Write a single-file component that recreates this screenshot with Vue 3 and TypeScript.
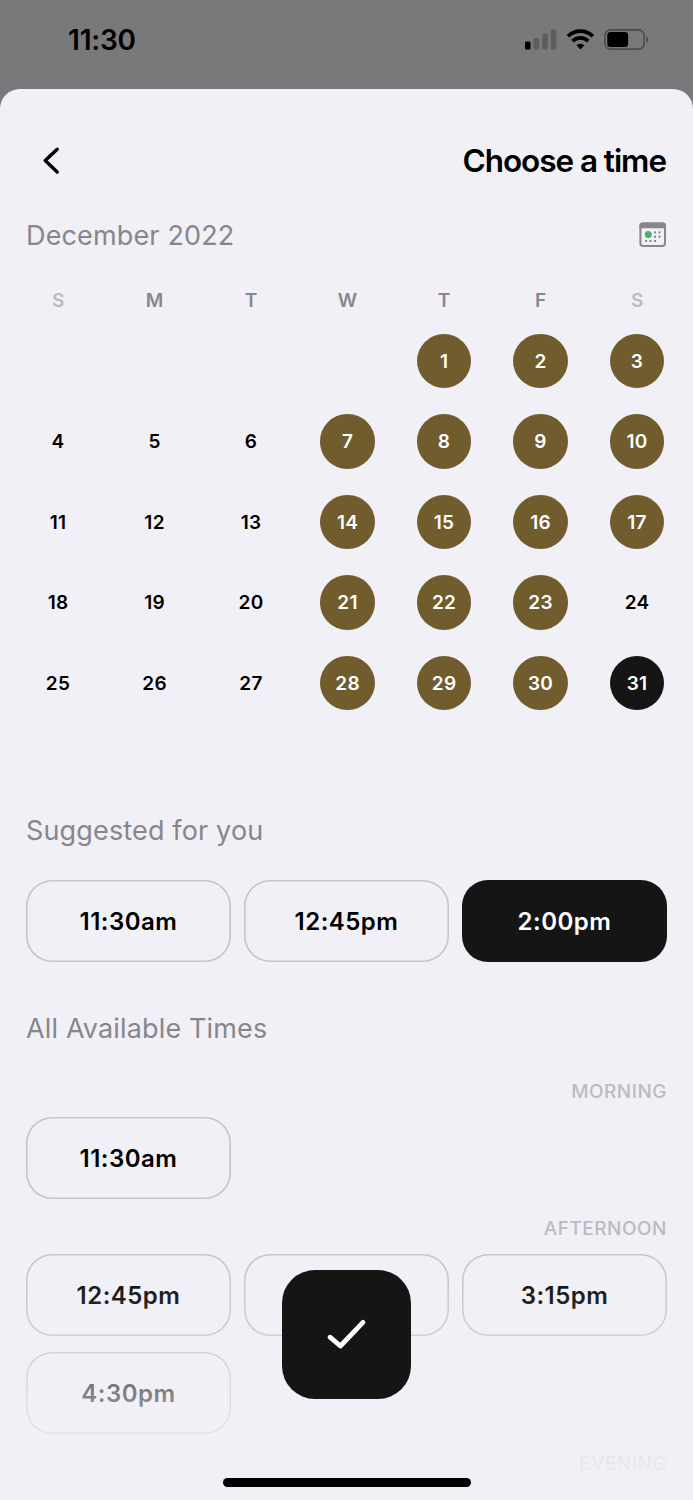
<script setup lang="ts">
interface Day {
  n: number
  state: 'open' | 'plain' | 'selected'
}

const weekdays: string[] = ['S', 'M', 'T', 'W', 'T', 'F', 'S']
const plain: number[] = [4, 5, 6, 11, 12, 13, 18, 19, 20, 24, 25, 26, 27]
const days: Day[] = Array.from({ length: 31 }, (_, i) => {
  const n = i + 1
  return { n, state: n === 31 ? 'selected' : plain.includes(n) ? 'plain' : 'open' }
})

const suggested: string[] = ['11:30am', '12:45pm', '2:00pm']
const chosen = '2:00pm'
const afternoon: string[] = ['12:45pm', '2:00pm', '3:15pm', '4:30pm']
</script>

<template>
  <div class="screen">
    <header class="status">
      <span class="clock">11:30</span>
      <svg class="indicators" width="126" height="24" viewBox="0 0 126 24">
        <rect x="0" y="12.6" width="5.6" height="8" rx="1.6" fill="#000" />
        <rect x="8.6" y="9" width="5.6" height="11.6" rx="1.6" fill="#5d5d5f" />
        <rect x="17.2" y="4.8" width="5.6" height="15.8" rx="1.6" fill="#5d5d5f" />
        <rect x="25.8" y="0.4" width="5.6" height="20.2" rx="1.6" fill="#5d5d5f" />
        <g fill="none" stroke="#000" stroke-width="3.7">
          <path d="M43 7.2a17.6 17.6 0 0 1 24.8 0" />
          <path d="M47.5 12.1a11.2 11.2 0 0 1 15.8 0" />
        </g>
        <path d="M55.4 20.4l-4-4.1a5.8 5.8 0 0 1 8 0z" fill="#000" />
        <rect x="79.9" y="0.9" width="39.2" height="19.2" rx="5.6" fill="none" stroke="#4b4b4d" stroke-width="1.6" />
        <rect x="82.3" y="3" width="20.8" height="15" rx="3.2" fill="#000" />
        <path d="M121.2 7.2c2.8 1 2.8 5.6 0 6.6z" fill="#4b4b4d" />
      </svg>
    </header>

    <main class="sheet">
      <div class="nav">
        <svg class="back" width="20" height="30" viewBox="0 0 20 30">
          <path d="M16.2 3.2L4.200 14.600l12 11.500" fill="none" stroke="#000" stroke-width="3.400" stroke-linecap="round" stroke-linejoin="round" />
        </svg>
        <h1>Choose a time</h1>
      </div>

      <div class="month">
        <h2>December 2022</h2>
        <svg class="month-icon" width="28" height="26" viewBox="0 0 28 26">
          <rect x="1.4" y="1.400" width="24.600" height="22.600" rx="2.800" fill="#f1f0f6" stroke="#87868b" stroke-width="2" />
          <path d="M.4 6.200V3.400a3 3 0 0 1 3-3H24a3 3 0 0 1 3 3v2.800z" fill="#87868b" />
          <circle cx="9.300" cy="12.400" r="3.500" fill="#45b36b" />
          <g fill="#87868b">
            <rect x="15" y="9.400" width="2" height="2" />
            <rect x="19.500" y="9.400" width="2" height="2" />
            <rect x="15" y="13.700" width="2" height="2" />
            <rect x="19.500" y="13.700" width="2" height="2" />
            <rect x="6.200" y="18" width="2" height="2" />
            <rect x="10.500" y="18" width="2" height="2" />
            <rect x="15" y="18" width="2" height="2" />
          </g>
        </svg>
      </div>

      <div class="calendar weekdays">
        <span v-for="(d, i) in weekdays" :key="i" :class="{ weekend: i === 0 || i === 6 }">{{ d }}</span>
      </div>
      <div class="calendar days">
        <span v-for="d in days" :key="d.n" class="day" :class="[d.state, { first: d.n === 1 }]">{{ d.n }}</span>
      </div>

      <h2 class="suggested-title">Suggested for you</h2>
      <div class="slots">
        <button v-for="t in suggested" :key="t" class="slot" :class="{ chosen: t === chosen }">{{ t }}</button>
      </div>

      <h2 class="all-title">All Available Times</h2>
      <h3>MORNING</h3>
      <div class="slots">
        <button class="slot">11:30am</button>
      </div>
      <h3 class="next">AFTERNOON</h3>
      <div class="slots">
        <button v-for="t in afternoon" :key="t" class="slot">{{ t }}</button>
      </div>
      <h3 class="next">EVENING</h3>
      <div class="slots">
        <button class="slot"></button>
      </div>
    </main>

    <div class="fade"></div>
    <button class="confirm" aria-label="Confirm">
      <svg width="42" height="34" viewBox="0 0 42 34">
        <path d="M4 19.200L14.400 28 37 4.400" fill="none" stroke="#fff" stroke-width="4.800" stroke-linecap="round" stroke-linejoin="round" />
      </svg>
    </button>
    <div class="home-bar"></div>
  </div>
</template>

<style>
body {
  margin: 0;
}
</style>

<style scoped>
.screen {
  position: relative;
  width: 693px;
  height: 1500px;
  overflow: hidden;
  background: #79797b;
  font-family: Inter, "Liberation Sans", sans-serif;
  color: #000;
}
.status {
  height: 89px;
  display: flex;
  justify-content: space-between;
  padding: 0 42px 0 68px;
  box-sizing: border-box;
}
.clock {
  margin-top: 22px;
  line-height: 36px;
  font-size: 28px;
  font-weight: 600;
  letter-spacing: -0.2px;
}
.indicators {
  margin-top: 29px;
}
.sheet {
  height: 1411px;
  box-sizing: border-box;
  padding: 51px 26px 0;
  border-radius: 20px 20px 0 0;
  background: #f1f0f6;
  overflow: hidden;
}
.nav,
.month {
  display: flex;
  justify-content: space-between;
  align-items: center;
}
.nav {
  height: 42px;
}
.back {
  margin-left: 15px;
}
h1,
h2,
h3 {
  margin: 0;
}
h1 {
  padding-right: 1px;
  font-size: 31.5px;
  line-height: 42px;
  font-weight: 600;
  letter-spacing: -1.05px;
}
h2 {
  font-size: 27px;
  line-height: 36px;
  font-weight: 400;
  letter-spacing: 0.15px;
  color: #87868b;
}
.month {
  height: 36px;
  margin-top: 36px;
}
.month-icon {
  margin-bottom: 2px;
}
.calendar {
  display: grid;
  grid-template-columns: repeat(7, 96.5px);
  margin: 0 -16.5px 0 -16.2px;
  justify-items: center;
}
.weekdays {
  margin-top: 35px;
  line-height: 24px;
  font-size: 19px;
  font-weight: 600;
  color: #87868b;
}
.weekend {
  color: #bcbbc0;
}
.days {
  margin-top: 20.5px;
  row-gap: 26px;
}
.day {
  width: 54.5px;
  height: 54.5px;
  box-sizing: border-box;
  padding-top: 1px;
  line-height: 54.5px;
  border-radius: 50%;
  text-align: center;
  font-size: 19px;
  font-weight: 600;
  letter-spacing: 0.3px;
}
.first {
  grid-column-start: 5;
}
.open {
  background: #705c2d;
  color: #fff;
}
.selected {
  background: #151515;
  color: #fff;
}
.suggested-title {
  margin-top: 102.5px;
}
.slots {
  display: grid;
  grid-template-columns: repeat(3, 1fr);
  gap: 16px 13px;
}
.suggested-title + .slots {
  margin-top: 31px;
}
.slot {
  height: 82px;
  padding: 2px 0 0;
  border: 0;
  border-radius: 26px;
  background: transparent;
  box-shadow: inset 0 0 0 1.6px #c6c5ca;
  font: 600 24px/30px Inter, "Liberation Sans", sans-serif;
  letter-spacing: 0.5px;
  color: #000;
}
.chosen {
  background: #151515;
  box-shadow: none;
  color: #fff;
}
.all-title {
  margin-top: 49px;
}
h3 {
  margin-top: 33px;
  height: 24px;
  margin-bottom: 13px;
  line-height: 24px;
  font-size: 19px;
  font-weight: 550;
  letter-spacing: 0.5px;
  text-align: right;
  color: #bcbbc0;
}
h3.next {
  margin-top: 18px;
}
.fade {
  position: absolute;
  inset: 1240px 0 0;
  background: linear-gradient(
    rgba(241, 240, 246, 0) 0,
    rgba(241, 240, 246, 0.12) 55px,
    rgba(241, 240, 246, 0.28) 105px,
    rgba(241, 240, 246, 0.53) 153px,
    rgba(241, 240, 246, 0.7) 194px,
    rgba(241, 240, 246, 0.84) 224px,
    rgba(241, 240, 246, 0.97) 250px
  );
}
.confirm {
  position: absolute;
  left: 282px;
  top: 1270px;
  width: 129px;
  height: 129px;
  padding: 0;
  border: 0;
  border-radius: 33px;
  background: #151515;
  display: flex;
  align-items: center;
  justify-content: center;
}
.home-bar {
  position: absolute;
  left: 223px;
  top: 1478px;
  width: 248px;
  height: 9px;
  border-radius: 5px;
  background: #000;
}
</style>
